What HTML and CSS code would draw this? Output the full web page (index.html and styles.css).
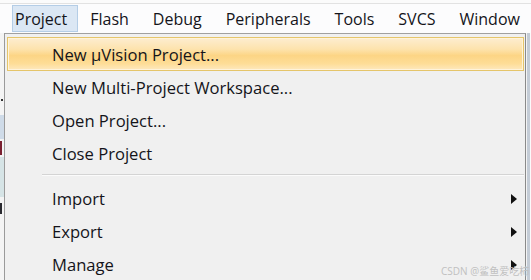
FILE: index.html
```html
<!DOCTYPE html>
<html lang="en">
  <head>
    <meta charset="utf-8">
    <title>Project menu</title>
    <meta name="viewport" content="width=device-width, initial-scale=1">
    <link rel="stylesheet" href="styles.css">
  </head>
  <body>
    <div class="menubar">
      <span class="menu open">Project</span>
      <span class="menu">Flash</span>
      <span class="menu">Debug</span>
      <span class="menu">Peripherals</span>
      <span class="menu">Tools</span>
      <span class="menu">SVCS</span>
      <span class="menu">Window</span>
    </div>
    <div class="workarea">
      <div class="toolstrip">
        <span class="tool-dot"></span>
        <span class="tool-blue"></span>
        <span class="tool-mark red"></span>
        <span class="tool-blue tall"></span>
        <span class="tool-mark"></span>
      </div>
      <div class="dropdown">
        <div class="item active">New µVision Project...</div>
        <div class="item">New Multi-Project Workspace...</div>
        <div class="item">Open Project...</div>
        <div class="item">Close Project</div>
        <div class="sep"></div>
        <div class="item sub">Import<span class="arrow"></span></div>
        <div class="item sub">Export<span class="arrow"></span></div>
        <div class="item sub">Manage<span class="arrow"></span></div>
      </div>
      <div class="edge"></div>
    </div>
    <div class="watermark">CSDN @鲨鱼爱吃柿</div>
  </body>
</html>
```

FILE: styles.css
```css
body {
  margin: 0;
  width: 531px;
  height: 280px;
  overflow: hidden;
  background: #fbfbfb;
  font-family: "Open Sans", "Noto Sans", "Noto Sans CJK SC", sans-serif;
  font-size: 16px;
  color: #14141a;
  position: relative;
}
.menubar {
  display: flex;
  align-items: flex-start;
  height: 29px;
  margin-top: 3px;
  border-top: 1px solid #e2e2e2;
  background: #fcfcfd;
}
.menu {
  margin-top: 1px;
  height: 27px;
  line-height: 26px;
  padding: 0 11px 0 11px;
  border: 1px solid transparent;
  box-sizing: border-box;
}
.menu.open {
  margin-left: 12px;
  padding-left: 2px;
  padding-right: 10px;
  background: #dbe7f4;
  border-color: #b4cde6;
}
.workarea {
  display: flex;
  height: 247px;
}
.toolstrip {
  width: 4px;
  border-right: 1px solid #9a9a9a;
  background: #f4f4f4;
  display: flex;
  flex-direction: column;
  overflow: hidden;
}
.tool-dot {
  width: 2px;
  height: 2px;
  margin: 66px 0 0 1px;
  background: #333;
}
.tool-blue {
  height: 24px;
  margin-top: 14px;
  background: #cfdbe8;
}
.tool-blue.tall {
  height: 40px;
  margin-top: 2px;
  background: #d6e4e6;
}
.tool-mark {
  width: 2px;
  height: 11px;
  margin-top: 6px;
  background: #2a2a30;
}
.tool-mark.red {
  height: 14px;
  margin-top: 2px;
  background: #7a2030;
}
.dropdown {
  width: 521px;
  border-right: 1px solid #8a8a8a;
  background: #f0f0f0;
  padding: 3px 1px 0 2px;
  box-sizing: border-box;
  border-top: 1px solid #a0a0a0;
  font-size: 16.6px;
}
.item {
  height: 33px;
  line-height: 33px;
  padding-left: 45px;
  border: 1px solid transparent;
  border-left: 0;
  border-right: 0;
  box-sizing: border-box;
  display: flex;
  justify-content: space-between;
  align-items: center;
}
.item.active {
  height: 34px;
  border: 1px solid #e5c56a;
  padding-left: 44px;
  background: linear-gradient(#fdedd0 0%, #fde3ad 35%, #fcd585 55%, #fedd97 80%, #fee9bf 100%);
  box-shadow: inset 0 0 0 1px #fff3da;
}
.sep {
  height: 12px;
  margin-left: 35px;
  position: relative;
}
.sep::after {
  content: "";
  position: absolute;
  left: 0;
  right: 0;
  top: 4px;
  height: 1px;
  background: #d4d4d4;
  border-bottom: 1px solid #fbfbfb;
}
.arrow {
  width: 0;
  height: 0;
  margin-right: 7px;
  border-left: 6px solid #111;
  border-top: 5px solid transparent;
  border-bottom: 5px solid transparent;
}
.edge {
  width: 3px;
  background: #c4ccd6;
  border-left: 1px solid #f4f4f4;
}
.watermark {
  position: absolute;
  left: 441px;
  top: 263px;
  font-size: 10px;
  color: #c0c0c0;
  white-space: nowrap;
}
```
